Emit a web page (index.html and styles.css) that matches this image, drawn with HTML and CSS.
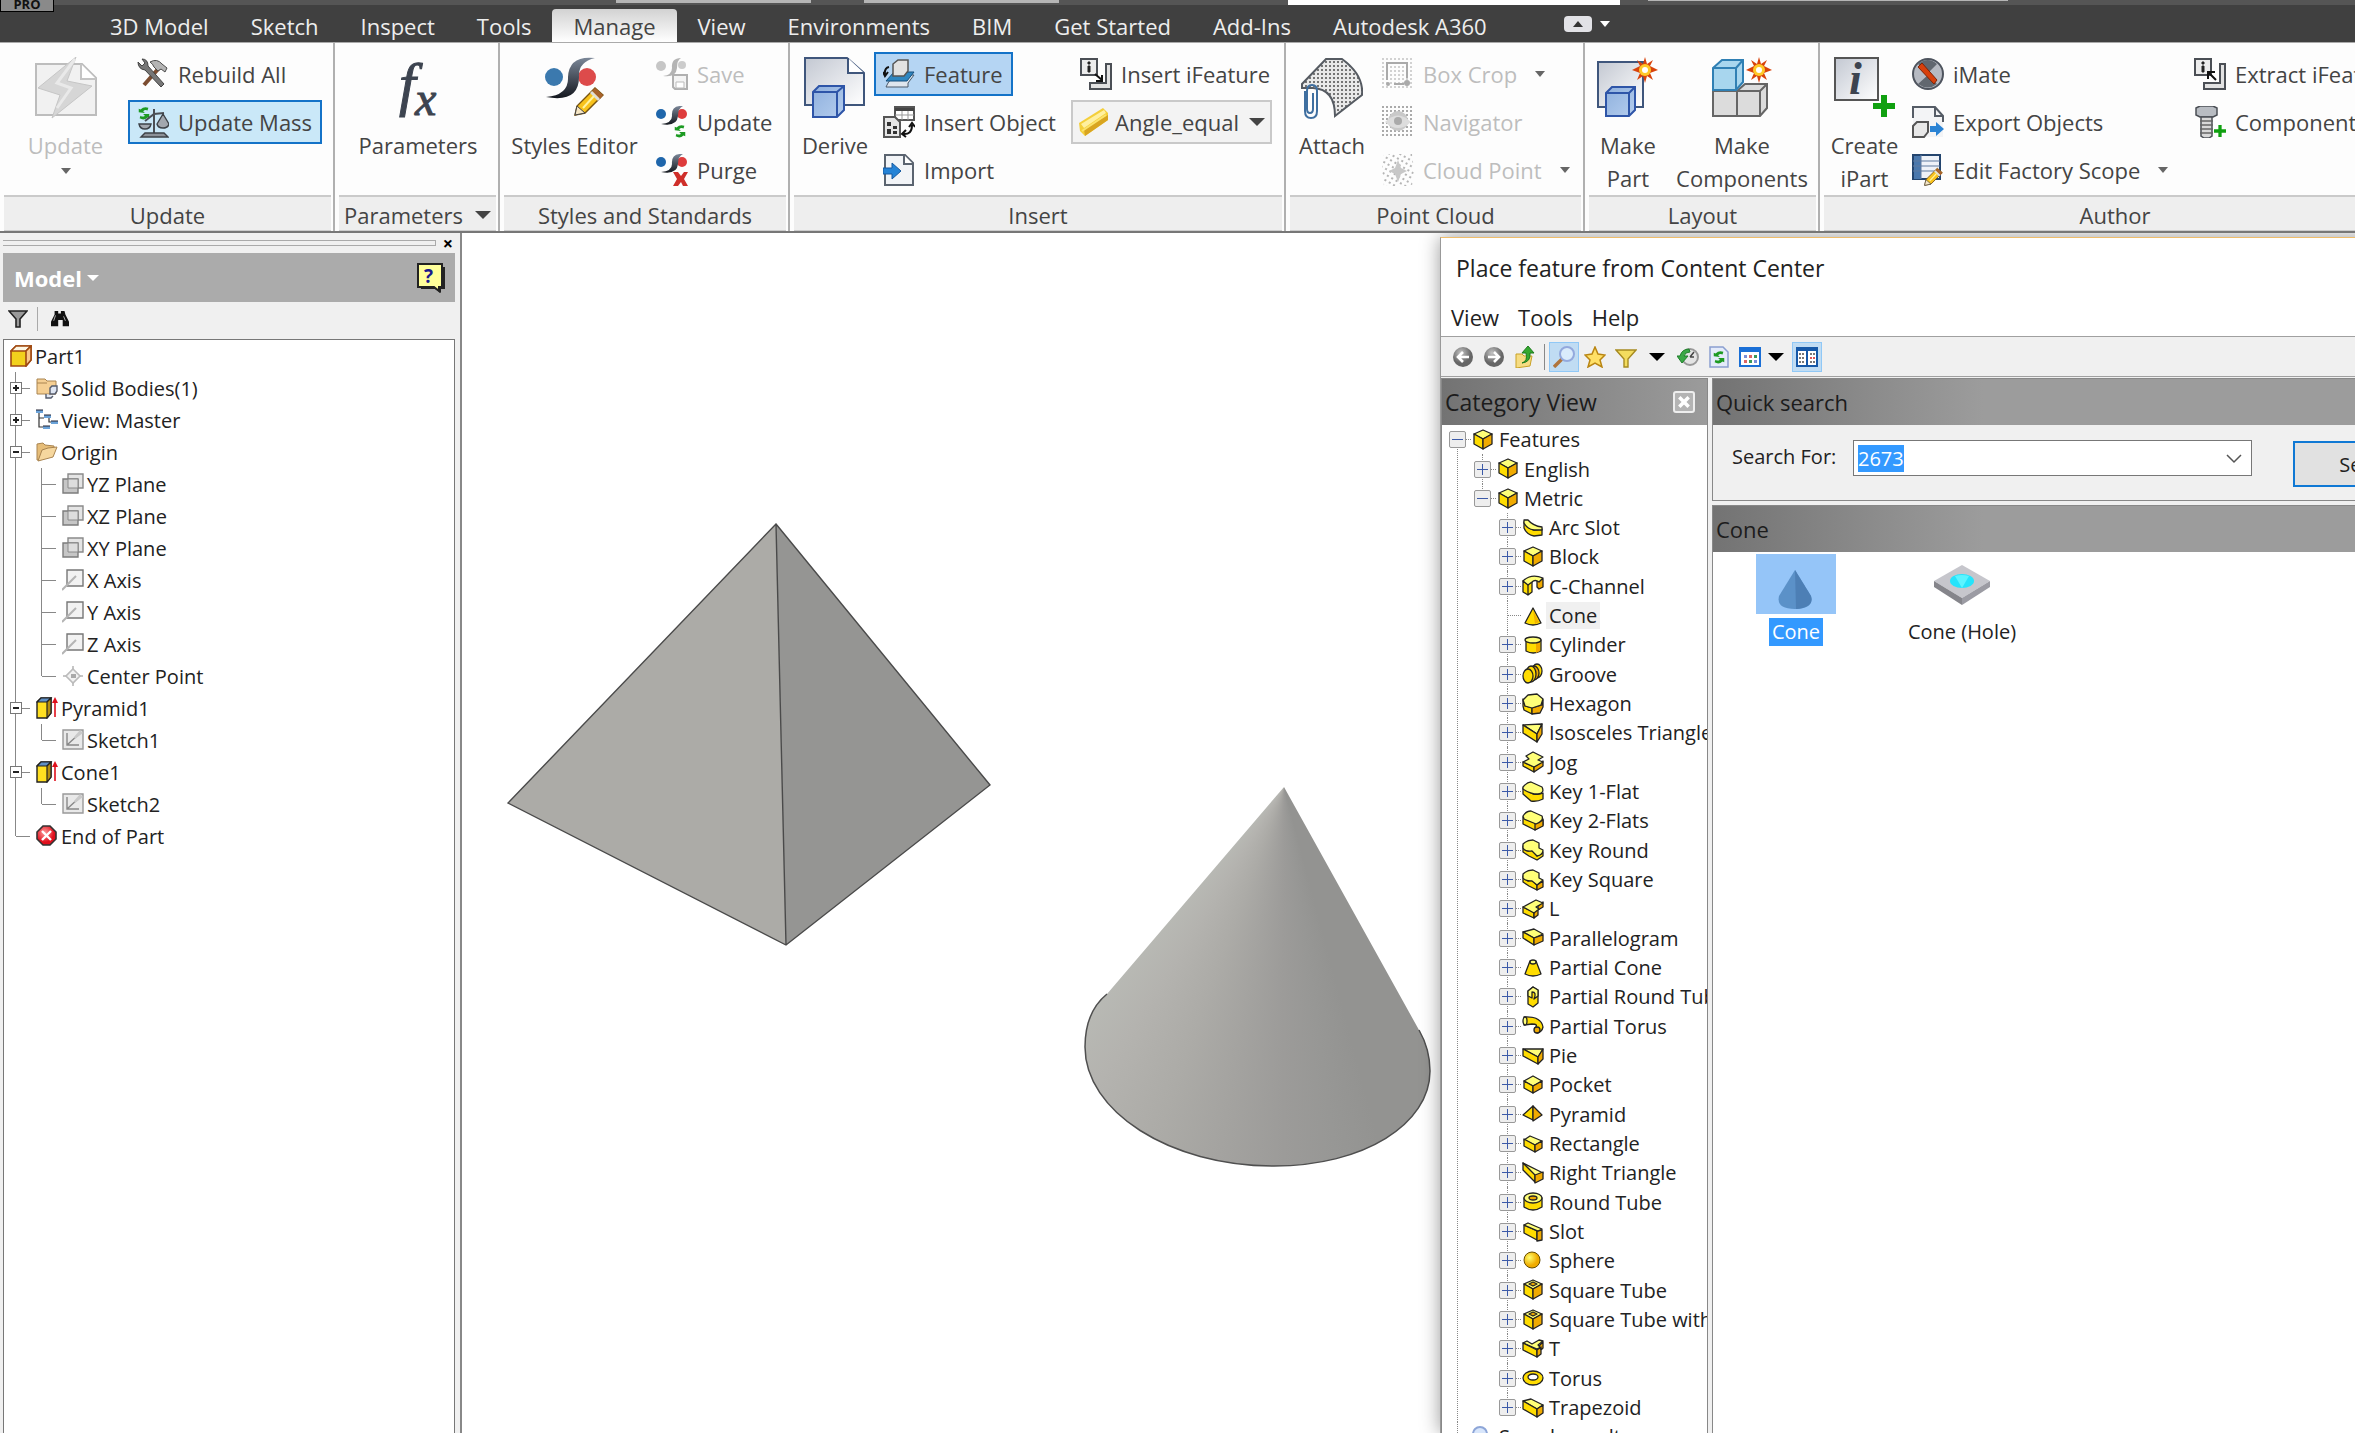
FILE: index.html
```html
<!DOCTYPE html>
<html lang="en">
<head>
  <meta charset="utf-8">
  <meta name="viewport" content="width=device-width, initial-scale=1.0">
  <title>Inventor - Part1</title>
  <link rel="stylesheet" href="styles.css">
</head>
<body>

  <!-- icon set -->
  <svg class="defs" width="0" height="0">
    <defs>
      <linearGradient id="gPage" x1="0" y1="0" x2="1" y2="1"><stop offset="0" stop-color="#c3c8d2"/><stop offset="1" stop-color="#fff"/></linearGradient>
      <linearGradient id="gSwoosh" x1="0" y1="0" x2="0" y2="1"><stop offset="0" stop-color="#7b8798"/><stop offset="1" stop-color="#14181f"/></linearGradient>
      <linearGradient id="gBlue" x1="0" y1="0" x2="1" y2="1"><stop offset="0" stop-color="#8fb0dd"/><stop offset="1" stop-color="#b4cdee"/></linearGradient>
      <radialGradient id="gSphere" cx=".35" cy=".35"><stop offset="0" stop-color="#ffff70"/><stop offset="1" stop-color="#f0ac00"/></radialGradient>
      <radialGradient id="gRed" cx=".4" cy=".35"><stop offset="0" stop-color="#ff9d9d"/><stop offset="1" stop-color="#e00f1c"/></radialGradient>
      <radialGradient id="gRound" cx=".4" cy=".3"><stop offset="0" stop-color="#c4c4c4"/><stop offset="1" stop-color="#666"/></radialGradient>
    </defs>

    <!-- shared bits -->
    <symbol id="sync" viewBox="0 0 16 16"><path d="M2 7V3l2 1q4-4 9-2l-1 3q-3-1-5 1l2 2zM14 9v5l-2-1q-4 4-9 1l1-3q3 2 5 0L7 9z" fill="#1c9a22"/></symbol>
    <symbol id="spark" viewBox="0 0 26 26"><path d="M13 0l2 7 6-4-3 6 8 4-8 3 3 7-6-4-2 7-2-7-6 4 3-7-8-3 8-4-3-6 6 4z" fill="#d8430b"/><circle cx="13" cy="13" r="6" fill="#ffc928"/><circle cx="13" cy="13" r="3" fill="#fff"/></symbol>
    <symbol id="plus" viewBox="0 0 22 22"><path d="M8 0h6v8h8v6h-8v8H8v-8H0V8h8z" fill="#10a010"/></symbol>
    <symbol id="swoosh" viewBox="0 0 32 20"><circle cx="5" cy="8" r="5" fill="#1f66ab"/><circle cx="26" cy="8" r="5" fill="#de3c3c"/><path d="M27 0q-12-1-11 10 0 7-11 8 16 3 17-8 0-8 5-10z" fill="url(#gSwoosh)"/></symbol>
    <symbol id="pencil" viewBox="0 0 30 30"><path d="M1 29l2-9L21 2l8 7-18 18z" fill="#f8c21c" stroke="#7a5510" stroke-width="1.4"/><path d="M21 2l8 7-3 4-8-8z" fill="#a8622c"/><path d="M18 5l8 8-2 2-8-8z" fill="#ddd"/><path d="M1 29l2-9 8 7z" fill="#f6e6c4" stroke="#444"/><path d="M9 22L20 10" stroke="#fff3a0" stroke-width="2"/></symbol>

    <!-- ribbon, large -->
    <symbol id="b-update" viewBox="0 0 62 62"><path d="M1 7h46l14 14v37H1z" fill="#f1f1f1" stroke="#bdbdbd" stroke-width="2"/><path d="M46 7v15h15" fill="#fff" stroke="#c4c4c4" stroke-width="2"/><path d="M41 0L3 31l22 7-8 23 40-32-25-5z" fill="#d6d6d6" stroke="#c6c6c6"/><path d="M40 2L22 26l14 5-14 20" fill="none" stroke="#e9e9e9" stroke-width="3"/></symbol>
    <symbol id="b-styles" viewBox="0 0 62 62"><circle cx="10" cy="20" r="9" fill="#3b79ae"/><circle cx="43" cy="20" r="9" fill="#dd4b4b"/><path d="M51 1Q25-2 24 20q1 18-22 20 33 6 33-20Q34 5 51 1z" fill="url(#gSwoosh)"/><use href="#pencil" x="30" y="29" width="30" height="30"/></symbol>
    <symbol id="b-derive" viewBox="0 0 62 62"><path d="M1 1h42l17 15v32H1z" fill="url(#gPage)" stroke="#3f567c" stroke-width="2"/><path d="M44 1v15h16" fill="#fff" stroke="#3f567c" stroke-width="2"/><path d="M9 35l6-6h25v24l-7 7H9z" fill="url(#gBlue)" stroke="#2e55a8" stroke-width="2"/><path d="M9 35h24v25M33 35l7-6" fill="none" stroke="#2e55a8" stroke-width="2"/></symbol>
    <symbol id="b-attach" viewBox="0 0 62 62"><pattern id="dots" width="4" height="4" patternUnits="userSpaceOnUse"><rect width="4" height="4" fill="#e9e9e9"/><rect width="2" height="2" fill="#757575"/></pattern><path d="M1 27L25 2h16q22 16 20 36L34 59Q34 32 12 31H1z" fill="url(#dots)" stroke="#565b62" stroke-width="2"/><path d="M4 34v20q0 7 6 7t6-7V34q0-6-5-6t-5 6v18q0 4 3 4t3-4V36" fill="none" stroke="#3f6fa0" stroke-width="2"/></symbol>
    <symbol id="b-part" viewBox="0 0 62 62"><path d="M1 5h45v45H1z" fill="url(#gPage)" stroke="#3f567c" stroke-width="2"/><path d="M9 36l6-6h23v23l-6 6H9z" fill="url(#gBlue)" stroke="#2e55a8" stroke-width="2"/><path d="M9 36h23v23M32 36l6-6" fill="none" stroke="#2e55a8" stroke-width="2"/><use href="#spark" x="35" y="0" width="26" height="26"/></symbol>
    <symbol id="b-comps" viewBox="0 0 62 62"><path d="M2 34h24V59H2zM26 34l8-7h22v24l-7 8H26z" fill="#dcdcdc" stroke="#666" stroke-width="2"/><path d="M26 34h23v25M49 34l7-7M26 34v25" fill="none" stroke="#666" stroke-width="2"/><path d="M2 11l9-8h21v22l-7 8H2z" fill="#a8d6ee" stroke="#3080b4" stroke-width="2"/><path d="M2 11h23v22M25 11l7-8" fill="none" stroke="#3080b4" stroke-width="2"/><use href="#spark" x="35" y="0" width="26" height="26"/></symbol>

    <!-- ribbon, small -->
    <symbol id="s-rebuild" viewBox="0 0 32 32"><path d="M7 27L22 10" stroke="#7b4c30" stroke-width="4"/><path d="M13 4q7-4 12 2l5 4-2 4-4-3-3 2-4-4q-1-3-4-5z" fill="#b4b4b4" stroke="#4c4c4c"/><path d="M1 4l4 4 3-3-3-4q6 0 6 7l16 18-3 3L8 12Q1 11 1 4z" fill="#777" stroke="#444"/></symbol>
    <symbol id="s-mass" viewBox="0 0 32 32"><use href="#sync" x="0" y="0" width="14" height="14"/><path d="M17 3v25M8 15l9-7 10-1" stroke="#4b4f55" stroke-width="2" fill="none"/><path d="M2 18h12q-1 5-6 5t-6-5zM20 18l6-10 6 10q-1 4-6 4t-6-4z" fill="#a2a7ae" stroke="#3d4147" stroke-width="1.4"/><path d="M4 31l4-4h19l4 4z" fill="#8c9198" stroke="#3d4147" stroke-width="1.4"/></symbol>
    <symbol id="s-save" viewBox="0 0 32 32"><circle cx="5" cy="8" r="5" fill="#c6c6c6"/><circle cx="26" cy="7" r="4" fill="#ccc"/><path d="M25 0q-10 0-9 10 0 7-9 8 13 2 14-8 0-8 4-10z" fill="#b4b4b4"/><path d="M17 17h14v14H19l-2-2z" fill="#f4f4f4" stroke="#b0b0b0" stroke-width="2"/><path d="M20 24h8v6h-8z" fill="#fff" stroke="#bbb"/></symbol>
    <symbol id="s-sup" viewBox="0 0 32 32"><use href="#swoosh" width="32" height="20"/><use href="#sync" x="17" y="18" width="14" height="14"/></symbol>
    <symbol id="s-purge" viewBox="0 0 32 32"><use href="#swoosh" width="32" height="20"/><path d="M17 18h5l3 4 3-4h4l-4 7 4 7h-5l-2-4-3 4h-5l4-7z" fill="#cf2f2a"/></symbol>
    <symbol id="s-feature" viewBox="0 0 32 32"><path d="M5 25l6-8h20l-6 8v4H3z" fill="#dfe6ee" stroke="#4c5b6a"/><path d="M3 23l8-9h20l-7 9z" fill="#2f86c0" stroke="#174f7c"/><path d="M10 6l5-4h10v11l-4 5H10z" fill="#e2e2e2" stroke="#555" stroke-width="1.5"/><path d="M6 9q-5 1-4 8M0 14l2 4 3-4" fill="none" stroke="#111" stroke-width="2"/></symbol>
    <symbol id="s-object" viewBox="0 0 32 32"><path d="M12 1h19v13H12z" fill="#fff" stroke="#555" stroke-width="2"/><path d="M12 2h19v3H12z" fill="#444"/><path d="M12 9h19M19 5v9M25 5v9" stroke="#999"/><path d="M1 11h11l5 5v15H1z" fill="#e6e6e6" stroke="#555" stroke-width="2"/><path d="M4 16h4v4H4zM4 23h4v5H4zM10 20h4v3h-4zM10 25h4v3h-4z" fill="#333"/><path d="M20 28q9 1 9-9M26 21l3-4 3 4M23 24l-4 4 4 3" fill="none" stroke="#111" stroke-width="2"/></symbol>
    <symbol id="s-import" viewBox="0 0 32 32"><path d="M2 1h20l8 8v22H2z" fill="#f2f4f7" stroke="#5b6470" stroke-width="2"/><path d="M21 1v9h9" fill="#fff" stroke="#5b6470" stroke-width="2"/><path d="M0 14h9v-5l9 8-9 8v-5H0z" fill="#2583d6" stroke="#1559a0"/></symbol>
    <symbol id="s-ifeature" viewBox="0 0 32 32"><path d="M1 1h16v16H1z" fill="#ececec" stroke="#4b4f55" stroke-width="2"/><path d="M8 4h2v2H8zM8 8h2v6H8z" fill="#222" stroke="#222"/><path d="M26 6h5v25H10v-6h16z" fill="#e2e2e2" stroke="#4b4f55" stroke-width="2"/><path d="M15 16l7 6M22 17v6h-6" stroke="#111" stroke-width="2" fill="none"/></symbol>
    <symbol id="s-extract" viewBox="0 0 32 32"><path d="M1 1h16v16H1z" fill="#ececec" stroke="#4b4f55" stroke-width="2"/><path d="M8 4h2v2H8zM8 8h2v6H8z" fill="#222" stroke="#222"/><path d="M26 6h5v25H10v-6h16z" fill="#e2e2e2" stroke="#4b4f55" stroke-width="2"/><path d="M22 22l-7-7M14 21v-7h7" stroke="#111" stroke-width="2" fill="none"/></symbol>
    <symbol id="s-angle" viewBox="0 0 32 32"><path d="M1 17L25 2l5 5v7L7 30l-5-5z" fill="#f4cf3a"/><path d="M3 18L26 4l2 3L6 22z" fill="#fff0a0"/><path d="M6 23L30 9v5L7 30z" fill="#d9a520"/><path d="M4 25L28 9" stroke="#fbe36c" stroke-width="2"/></symbol>
    <symbol id="s-crop" viewBox="0 0 32 32"><pattern id="pdot" width="4" height="4" patternUnits="userSpaceOnUse"><rect width="2" height="2" fill="#d2d2d2"/></pattern><path d="M0 0h32v32H0z" fill="url(#pdot)"/><path d="M5 22V5h20v15M12 26h10" fill="none" stroke="#aaa" stroke-width="2"/><circle cx="6" cy="26" r="2" fill="#aaa"/><circle cx="25" cy="25" r="3" fill="#aaa"/></symbol>
    <symbol id="s-nav" viewBox="0 0 32 32"><pattern id="pdot2" width="4" height="4" patternUnits="userSpaceOnUse"><rect width="2" height="2" fill="#aaa"/></pattern><path d="M0 0h32v32H0z" fill="url(#pdot2)"/><circle cx="16" cy="15" r="10" fill="#c9c9c9"/><path d="M3 16q13-13 26 0-13 12-26 0z" fill="#ddd"/><circle cx="16" cy="15" r="4" fill="#aaa"/></symbol>
    <symbol id="s-cloud" viewBox="0 0 32 32"><pattern id="pdot3" width="5" height="5" patternUnits="userSpaceOnUse" patternTransform="rotate(30)"><rect width="2" height="2" fill="#b5b5b5"/></pattern><path d="M2 0h28l2 16-2 16H2L0 16z" fill="url(#pdot3)"/><path d="M16 6l3 8 6 3-6 3-3 8-3-8-6-3 6-3z" fill="#c8c8c8"/></symbol>
    <symbol id="s-imate" viewBox="0 0 32 32"><circle cx="16" cy="16" r="15" fill="#b6bac2" stroke="#4e545e" stroke-width="2"/><path d="M6 6q10-8 19 0L16 15zM6 26q10 7 19 0l-9-9z" fill="#61676f"/><path d="M6 9l4-4 15 17-3 4z" fill="#d8400c" stroke="#7e2407"/></symbol>
    <symbol id="s-export" viewBox="0 0 32 32"><path d="M1 1h22l8 9v21H1z" fill="#f3f4f6"/><path d="M1 12V1h22l8 9v6M23 1v9h8" fill="none" stroke="#555c66" stroke-width="2"/><path d="M1 20l4-4h11v10l-4 5H1z" fill="#e8e8e8" stroke="#555" stroke-width="2"/><path d="M18 20h6v-4l8 7-8 7v-4h-6z" fill="#2a83d4"/></symbol>
    <symbol id="s-scope" viewBox="0 0 32 32"><path d="M1 1h27v24H1z" fill="#eef2f8" stroke="#24456e" stroke-width="2"/><path d="M2 2h7v23H2z" fill="#4a78ad"/><path d="M1 7h27M1 12h27M1 17h27M9 1v24" stroke="#5e7b9f"/><use href="#pencil" x="12" y="13" width="19" height="19"/></symbol>
    <symbol id="s-bolt" viewBox="0 0 32 32"><path d="M2 2l4-2h13l4 2v7l-4 2H6L2 9z" fill="#b8bcc2" stroke="#4b4f55" stroke-width="1.5"/><path d="M7 11h11v19l-3 2h-5l-3-2z" fill="#d8d8d8" stroke="#4b4f55" stroke-width="1.5"/><path d="M6 15h13M6 19h13M6 23h13M6 27h13" stroke="#666" stroke-width="1.5"/><use href="#plus" x="20" y="19" width="12" height="12"/></symbol>

    <!-- model browser -->
    <symbol id="m-filter" viewBox="0 0 20 18"><path d="M1 1h18l-7 8v8H8V9z" fill="#999" stroke="#222" stroke-width="1.6"/></symbol>
    <symbol id="m-find" viewBox="0 0 22 20"><path d="M5 1h4v3h3V1h4l1 4 4 8v5h-7v-7h-5v7H1v-5l4-8z" fill="#111"/><path d="M4 12l2-6M15 7l2 5" stroke="#bbb"/></symbol>
    <symbol id="m-part" viewBox="0 0 22 22"><path d="M1 6l5-5h15v14l-5 6H1z" fill="#f2d11c" stroke="#a04a12" stroke-width="1.6"/><path d="M1 6l5-5h15l-5 5z" fill="#fdf6e3" stroke="#a04a12" stroke-width="1.6"/><path d="M16 6l5-5v14l-5 6z" fill="#f9c88a" stroke="#a04a12" stroke-width="1.6"/></symbol>
    <symbol id="m-bodies" viewBox="0 0 22 22"><path d="M1 2h8l2 2h9v13H1z" fill="#f5cf93" stroke="#a98450"/><path d="M1 6h10" stroke="#a98450"/><path d="M14 11l2-2h5v5l-2 3h-5zM10 17v4h5l2-2" fill="#dfe6f3" stroke="#555c6c" stroke-width="1.4"/></symbol>
    <symbol id="m-view" viewBox="0 0 22 22"><path d="M3 3v15h5M3 9h5M13 9v4h4" fill="none" stroke="#333" stroke-width="1.2"/><path d="M0 1h7v3H0zM8 6h7v3H8zM15 12h7v3h-7zM7 17h7v3H7z" fill="#6ba3d9"/><path d="M0 1h7M8 6h7M15 12h7M7 17h7" stroke="#223"/></symbol>
    <symbol id="m-folder" viewBox="0 0 22 22"><path d="M1 3l6-1 2 2 9 1v4L3 19H1z" fill="#e6bd78" stroke="#a98450"/><path d="M6 9l6-2 9-1-4 10L2 20z" fill="#f6d79e" stroke="#a98450"/></symbol>
    <symbol id="m-plane" viewBox="0 0 22 22"><path d="M6 1h15v14H6z" fill="#e4e4e4" stroke="#8a8a8a" stroke-width="1.4"/><path d="M1 6h15v14H1z" fill="#c6c6c6" stroke="#7c7c7c" stroke-width="1.4"/><path d="M6 6h10v9H6z" fill="#ddd" stroke="#8a8a8a"/></symbol>
    <symbol id="m-axis" viewBox="0 0 22 22"><path d="M5 1h16v16H5z" fill="#f2f2f2" stroke="#777" stroke-width="1.4"/><path d="M0 21L14 7" stroke="#b4b4b4" stroke-width="2"/></symbol>
    <symbol id="m-point" viewBox="0 0 22 22"><path d="M11 1v20M1 11h20" stroke="#c6c6c6" stroke-width="2"/><path d="M11 4l7 7-7 7-7-7z" fill="#f2f2f2" stroke="#bbb" stroke-width="1.6"/><path d="M9 9h5v4H9z" fill="#aaa"/></symbol>
    <symbol id="m-extrude" viewBox="0 0 22 22"><path d="M1 5l4-4h10v15l-4 5H1z" fill="#ffdf20" stroke="#222" stroke-width="1.4"/><path d="M1 5l4-4h10l-4 4z" fill="#5f8fc4" stroke="#222" stroke-width="1.2"/><path d="M11 5l4-4v15l-4 5z" fill="#b48e10" stroke="#222" stroke-width="1.2"/><path d="M19 20V4" stroke="#e0101c" stroke-width="1.6"/><path d="M16 6l3-6 3 6z" fill="#e0101c"/></symbol>
    <symbol id="m-sketch" viewBox="0 0 22 22"><path d="M1 1h20v19H1z" fill="#e9e9e9" stroke="#999" stroke-width="1.4"/><path d="M5 4v12h12M5 16L17 5" fill="none" stroke="#888" stroke-width="1.4"/><path d="M12 8l6-7 3 3-8 6z" fill="#c9c9c9"/></symbol>
    <symbol id="m-end" viewBox="0 0 22 22"><path d="M7 1h7l6 6v7l-6 6H7l-6-6V7z" fill="url(#gRed)" stroke="#333" stroke-width="1.6"/><path d="M6 6l9 9M15 6l-9 9" stroke="#fff" stroke-width="2.4"/></symbol>

    <!-- content center toolbar -->
    <symbol id="t-back" viewBox="0 0 22 22"><circle cx="11" cy="11" r="10" fill="url(#gRound)"/><path d="M17 11H6M11 6l-5 5 5 5" fill="none" stroke="#fff" stroke-width="2.6"/></symbol>
    <symbol id="t-next" viewBox="0 0 22 22"><circle cx="11" cy="11" r="10" fill="url(#gRound)"/><path d="M5 11h11M11 6l5 5-5 5" fill="none" stroke="#fff" stroke-width="2.6"/></symbol>
    <symbol id="t-up" viewBox="0 0 22 22"><path d="M2 8h6l2 2h8l-2 10-14 2z" fill="#f6dc82" stroke="#c9a227"/><path d="M8 17q6-2 4-10H8l6-7 6 7h-4q1 9-8 10z" fill="#35a82f" stroke="#1c7a1c"/></symbol>
    <symbol id="t-search" viewBox="0 0 22 22"><path d="M1 21l8-8" stroke="#b0743c" stroke-width="3.4"/><circle cx="14" cy="8" r="7" fill="#d9ebfb" stroke="#93a9dd" stroke-width="2"/></symbol>
    <symbol id="t-star" viewBox="0 0 22 22"><path d="M11 1l3 7 7 1-5 5 2 7-7-4-7 4 2-7-5-5 7-1z" fill="#ffe066" stroke="#b98512" stroke-width="1.5"/></symbol>
    <symbol id="t-funnel" viewBox="0 0 22 22"><path d="M1 4h20l-8 9v8H9v-8z" fill="#f3dc5e" stroke="#a68a20" stroke-width="1.4"/></symbol>
    <symbol id="t-history" viewBox="0 0 22 22"><circle cx="13" cy="11" r="8" fill="#e4e4e4" stroke="#999" stroke-width="2"/><path d="M13 11l4-5M13 11h4" stroke="#444" stroke-width="1.5"/><path d="M0 10h3q2-7 9-7l1 3q-5 0-6 4h4l-6 7z" fill="#3aa845" stroke="#1f7f2a"/></symbol>
    <symbol id="t-refresh" viewBox="0 0 22 22"><path d="M2 1h13l5 5v15H2z" fill="#e4ebfa" stroke="#8a9fd0" stroke-width="1.5"/><use href="#sync" x="4" y="4" width="14" height="14"/></symbol>
    <symbol id="t-grid" viewBox="0 0 22 22"><path d="M1 2h20v18H1z" fill="#fff" stroke="#1a6fd6" stroke-width="2"/><path d="M1 2h20v4H1z" fill="#1a6fd6"/><path d="M5 9h3v3H5zM15 14h3v3h-3z" fill="#7b8fd8"/><path d="M10 9h3v3h-3zM5 14h3v3H5z" fill="#d66"/><path d="M15 9h3v3h-3zM10 14h3v3h-3z" fill="#3a9a5a"/></symbol>
    <symbol id="t-layout" viewBox="0 0 22 22"><path d="M1 2h20v18H1z" fill="#fff" stroke="#1558a8" stroke-width="2"/><path d="M1 2h20v3H1zM10 2h2v18h-2z" fill="#1558a8"/><path d="M3 8h5M3 12h5M3 16h5M14 8h5M14 16h5" stroke="#777" stroke-width="2" stroke-dasharray="2 1"/><path d="M14 12h5" stroke="#d55" stroke-width="2" stroke-dasharray="2 1"/></symbol>

    <!-- category shapes -->
    <symbol id="c-block" viewBox="0 0 22 22"><path class="t" d="M11 1l9 4-9 5-9-5z"/><path class="l" d="M2 5l9 5v10l-9-5z"/><path class="r" d="M20 5l-9 5v10l9-5z"/></symbol>
    <symbol id="c-arc" viewBox="0 0 22 22"><path class="l" d="M2 5q4 7 10 8l8-1v6l-8 1Q5 18 2 11z"/><path class="t" d="M2 3l4 0q5 6 14 7v3h-8Q5 12 2 6z"/></symbol>
    <symbol id="c-channel" viewBox="0 0 22 22"><path class="r" d="M15 6l6-2v8l-4 2-2-2z"/><path class="l" d="M1 6l5 3v11l-5-3zM6 9l4-2v10l-4 3z"/><path class="t" d="M1 6Q9-2 21 3l-4 4q-4-3-7 0l-4 3z"/></symbol>
    <symbol id="c-cone" viewBox="0 0 22 22"><path class="l" d="M11 3l8 15q-8 4-16 0z"/><path d="M11 5l2 14 4-2z" fill="#f2b400"/></symbol>
    <symbol id="c-cylinder" viewBox="0 0 22 22"><path class="l" d="M4 6v11q7 4 15 0V6z"/><path d="M14 8v11l4-2V7z" fill="#f2a900"/><ellipse class="t" cx="11" cy="6" rx="8" ry="3"/></symbol>
    <symbol id="c-groove" viewBox="0 0 22 22"><ellipse class="l" cx="15" cy="8" rx="5" ry="7"/><ellipse class="r" cx="12" cy="10" rx="5" ry="7"/><ellipse class="l" cx="9" cy="11" rx="5" ry="8"/><ellipse class="l" cx="6" cy="13" rx="5" ry="7"/></symbol>
    <symbol id="c-hexagon" viewBox="0 0 22 22"><path class="l" d="M1 6l2 7 7 2v6l-8-4-1-4z"/><path class="r" d="M10 15l10-3 1-5v7l-3 6-8 1z"/><path class="t" d="M6 2l9-1 6 5-2 6-9 3-7-2-2-6z"/></symbol>
    <symbol id="c-iso" viewBox="0 0 22 22"><path class="t" d="M1 3l19-1-5 10z"/><path class="l" d="M1 3l14 9v8L1 11z"/><path class="r" d="M20 2l-5 10v8l5-8z"/></symbol>
    <symbol id="c-jog" viewBox="0 0 22 22"><path class="l" d="M1 11l11 5v5L1 15z"/><path class="r" d="M12 16l9-6v5l-9 6z"/><path class="t" d="M4 5l7-4 10 5-5 3 5 2-9 5-11-5 6-3z"/></symbol>
    <symbol id="c-key1" viewBox="0 0 22 22"><path class="l" d="M1 7l10 6q7 1 10-1v6q-6 3-12 2L1 13z"/><path class="t" d="M1 6q4-5 8-5l11 5q3 6-4 7-8 0-15-5z"/></symbol>
    <symbol id="c-key2" viewBox="0 0 22 22"><path class="l" d="M1 7l12 6 8-4v6l-8 5-12-6z"/><path class="r" d="M13 14l8-4v6l-8 4z"/><path class="t" d="M1 6q3-5 8-5l11 5q2 5-6 8L2 9z"/></symbol>
    <symbol id="c-keyr" viewBox="0 0 22 22"><path class="l" d="M1 7l5 5 5-1 4 6 6-4v4l-6 4-8-4-6-4z"/><path class="t" d="M1 5q4-4 10-4l6 3v5l4 2q0 5-6 6l-5-5q-7 1-9-3z"/></symbol>
    <symbol id="c-keys" viewBox="0 0 22 22"><path class="l" d="M1 7l5 5 4-1 5 5v5l-8-4-6-4z"/><path class="r" d="M15 16l6-4v6l-6 3z"/><path class="t" d="M1 5q4-4 10-4l6 3v5l4 2-6 5-5-4q-7 0-9-3z"/></symbol>
    <symbol id="c-l" viewBox="0 0 22 22"><path class="l" d="M1 9l11 5v6L1 15z"/><path class="r" d="M12 14l4-3v6l-4 3zM16 8l5-4v5l-5 3z"/><path class="t" d="M1 9L14 2l7 3-7 4 3 2-5 4z"/></symbol>
    <symbol id="c-para" viewBox="0 0 22 22"><path class="t" d="M1 5l11-3 9 5-9 4z"/><path class="l" d="M1 5l11 6v7L1 11z"/><path class="r" d="M12 11l9-3v6l-9 4z"/></symbol>
    <symbol id="c-pcone" viewBox="0 0 22 22"><path class="l" d="M8 4h6l5 13q-8 4-16 0z"/><ellipse class="t" cx="11" cy="5" rx="3" ry="2"/></symbol>
    <symbol id="c-ptube" viewBox="0 0 22 22"><path class="l" d="M6 5l5-4 5 3v13l-5 4-5-3z"/><path class="t" d="M6 5l5-4 5 3v6l-4 3q3-7-2-7v6l-4-2z"/></symbol>
    <symbol id="c-ptorus" viewBox="0 0 22 22"><path class="l" d="M2 2q17-1 19 10-1 5-6 6l-2-5q4-4-3-4l-8 1z"/><ellipse class="t" cx="3" cy="6" rx="2" ry="4"/><ellipse class="r" cx="15" cy="15" rx="3" ry="3"/></symbol>
    <symbol id="c-pie" viewBox="0 0 22 22"><path class="t" d="M1 4h20l-5 8z"/><path class="l" d="M1 4l15 8v7L1 11z"/><path class="r" d="M21 4l-5 8v7l5-5z"/></symbol>
    <symbol id="c-pocket" viewBox="0 0 22 22"><path class="t" d="M11 2l9 5-9 5-9-5z"/><path class="l" d="M2 7l9 5v7l-9-5z"/><path class="r" d="M20 7l-9 5v7l9-5z"/></symbol>
    <symbol id="c-pyramid" viewBox="0 0 22 22"><path class="l" d="M11 3v14L1 12z"/><path class="r" d="M11 3l9 9-9 6z"/></symbol>
    <symbol id="c-rect" viewBox="0 0 22 22"><path class="t" d="M8 3l12 5-7 4L2 7z"/><path class="l" d="M2 6l11 6v7L2 13z"/><path class="r" d="M13 12l7-4v7l-7 4z"/></symbol>
    <symbol id="c-right" viewBox="0 0 22 22"><path class="t" d="M1 1l20 10-8 3z"/><path class="l" d="M1 1l12 12v7L1 8z"/><path class="r" d="M13 13l8-3v7l-8 4z"/></symbol>
    <symbol id="c-tube" viewBox="0 0 22 22"><path class="l" d="M2 7v9q9 6 18 0V7z"/><ellipse class="t" cx="11" cy="7" rx="9" ry="5"/><ellipse class="r" cx="11" cy="7" rx="4" ry="2"/></symbol>
    <symbol id="c-slot" viewBox="0 0 22 22"><path class="l" d="M2 4l13 6v9L2 12z"/><path class="r" d="M15 10l5-1v10l-5 1z"/><path class="t" d="M2 4l4-2 14 6-4 2z"/></symbol>
    <symbol id="c-sphere" viewBox="0 0 22 22"><circle cx="10" cy="10" r="8" fill="url(#gSphere)" stroke="#664d00"/></symbol>
    <symbol id="c-sqtube" viewBox="0 0 22 22"><path class="t" d="M11 1l9 4-9 5-9-5z"/><path class="r" d="M11 3l4 2-4 2-4-2z"/><path class="l" d="M2 5l9 5v10l-9-5z"/><path class="r" d="M20 5l-9 5v10l9-5z"/></symbol>
    <symbol id="c-t" viewBox="0 0 22 22"><path class="t" d="M1 5l4-2 5 3 7-4 4 1-5 4 3 2-4 2z"/><path class="l" d="M1 5l14 7v7L1 12z"/><path class="r" d="M15 12l4-3v7l-4 3zM17 8l4-4v6l-2 2z"/></symbol>
    <symbol id="c-torus" viewBox="0 0 22 22"><ellipse class="l" cx="11" cy="11" rx="10" ry="7"/><ellipse cx="11" cy="10" rx="5" ry="3" fill="#fff" stroke="#222" stroke-width="1.3"/></symbol>
    <symbol id="c-trap" viewBox="0 0 22 22"><path class="t" d="M1 4l8-2 12 6-6 4z"/><path class="l" d="M1 4l14 8v8L1 12z"/><path class="r" d="M15 12l6-4v8l-6 4z"/></symbol>
    <symbol id="c-globe" viewBox="0 0 22 22"><circle cx="8" cy="8" r="7" fill="#d8e6fb" stroke="#8ea6d8" stroke-width="2"/></symbol>

    <!-- result thumbnails -->
    <symbol id="r-cone" viewBox="0 0 80 60"><path d="M39 16l16 26q3 13-16 13T23 42z" fill="#5b91c8"/><path d="M39 16l16 26q2 6-2 9-6 4-13 4z" fill="#4d7fb5"/></symbol>
    <symbol id="r-hole" viewBox="0 0 80 60"><path d="M40 11l28 16-28 17-28-17z" fill="#c6c6cc"/><path d="M12 27l28 17v7L12 33z" fill="#85858b"/><path d="M68 27L40 44v7l28-18z" fill="#9b9ba3"/><ellipse cx="40" cy="27" rx="12" ry="7" fill="#25e4fb"/><path d="M40 34l-7-12q7-2 14 0z" fill="#5cf4ff"/></symbol>
  </svg>

  <div class="app">

    <div class="top-strip">
      <span class="badge">PRO</span>
      <i class="seg seg-a"></i><i class="seg seg-b"></i><i class="seg seg-c"></i><i class="seg seg-d"></i>
    </div>

    <nav class="tabs">
      <a href="#">3D Model</a>
      <a href="#">Sketch</a>
      <a href="#">Inspect</a>
      <a href="#">Tools</a>
      <a href="#" class="active">Manage</a>
      <a href="#">View</a>
      <a href="#">Environments</a>
      <a href="#">BIM</a>
      <a href="#">Get Started</a>
      <a href="#">Add-Ins</a>
      <a href="#">Autodesk A360</a>
      <button class="collapse" aria-label="Minimize ribbon"><i class="up"></i></button>
      <i class="caret caret-light"></i>
    </nav>

    <div class="ribbon">
      <section class="panel p-update">
        <div class="panel-body">
          <button class="big" disabled><svg><use href="#b-update"/></svg><span>Update</span><i class="caret"></i></button>
          <div class="col">
            <button class="small"><svg><use href="#s-rebuild"/></svg>Rebuild All</button>
            <button class="small on-light"><svg><use href="#s-mass"/></svg>Update Mass</button>
          </div>
        </div>
        <div class="panel-title">Update</div>
      </section>

      <section class="panel p-params">
        <div class="panel-body">
          <button class="big"><svg viewBox="0 0 62 62"><text x="12" y="47" class="fx-f">f</text><text x="28" y="58" class="fx-x">x</text></svg><span>Parameters</span></button>
        </div>
        <div class="panel-title">Parameters <i class="caret caret-big"></i></div>
      </section>

      <section class="panel p-styles">
        <div class="panel-body">
          <button class="big"><svg><use href="#b-styles"/></svg><span>Styles Editor</span></button>
          <div class="col">
            <button class="small" disabled><svg><use href="#s-save"/></svg>Save</button>
            <button class="small"><svg><use href="#s-sup"/></svg>Update</button>
            <button class="small"><svg><use href="#s-purge"/></svg>Purge</button>
          </div>
        </div>
        <div class="panel-title">Styles and Standards</div>
      </section>

      <section class="panel p-insert">
        <div class="panel-body">
          <button class="big"><svg><use href="#b-derive"/></svg><span>Derive</span></button>
          <div class="col col-wide">
            <button class="small on-blue"><svg><use href="#s-feature"/></svg>Feature</button>
            <button class="small"><svg><use href="#s-object"/></svg>Insert Object</button>
            <button class="small"><svg><use href="#s-import"/></svg>Import</button>
          </div>
          <div class="col">
            <button class="small"><svg><use href="#s-ifeature"/></svg>Insert iFeature</button>
            <div class="combo">
              <svg><use href="#s-angle"/></svg>
              <select aria-label="iFeature"><option>Angle_equal</option></select>
              <i class="caret caret-big"></i>
            </div>
          </div>
        </div>
        <div class="panel-title">Insert</div>
      </section>

      <section class="panel p-cloud">
        <div class="panel-body">
          <button class="big"><svg><use href="#b-attach"/></svg><span>Attach</span></button>
          <div class="col">
            <button class="small" disabled><svg><use href="#s-crop"/></svg>Box Crop<i class="caret"></i></button>
            <button class="small" disabled><svg><use href="#s-nav"/></svg>Navigator</button>
            <button class="small" disabled><svg><use href="#s-cloud"/></svg>Cloud Point<i class="caret"></i></button>
          </div>
        </div>
        <div class="panel-title">Point Cloud</div>
      </section>

      <section class="panel p-layout">
        <div class="panel-body">
          <button class="big"><svg><use href="#b-part"/></svg><span>Make<br>Part</span></button>
          <button class="big"><svg><use href="#b-comps"/></svg><span>Make<br>Components</span></button>
        </div>
        <div class="panel-title">Layout</div>
      </section>

      <section class="panel p-author">
        <div class="panel-body">
          <button class="big"><svg viewBox="0 0 62 62"><path d="M1 1h43v42H1z" fill="url(#gPage)" stroke="#555" stroke-width="2"/><text x="15" y="37" class="ipart-i">i</text><use href="#plus" x="39" y="38" width="22" height="22"/></svg><span>Create<br>iPart</span></button>
          <div class="col col-author">
            <button class="small"><svg><use href="#s-imate"/></svg>iMate</button>
            <button class="small"><svg><use href="#s-export"/></svg>Export Objects</button>
            <button class="small"><svg><use href="#s-scope"/></svg>Edit Factory Scope<i class="caret"></i></button>
          </div>
          <div class="col">
            <button class="small"><svg><use href="#s-extract"/></svg>Extract iFeature</button>
            <button class="small"><svg><use href="#s-bolt"/></svg>Component</button>
          </div>
        </div>
        <div class="panel-title">Author</div>
      </section>
    </div>

    <div class="workspace">
      <aside class="model">
        <div class="grip"><i></i><button aria-label="Close">×</button></div>
        <div class="model-head">
          <button class="model-name">Model<i class="caret caret-white"></i></button>
          <button class="help" aria-label="Help"><svg viewBox="0 0 28 30"><path d="M4 4h24v22h-4v4l-6-4H4z" fill="#222"/><path d="M1 1h24v23h-3v4l-5-4H1z" fill="#ffff9a" stroke="#222" stroke-width="2"/><text x="7" y="20" class="help-q">?</text></svg></button>
        </div>
        <div class="model-tools">
          <button aria-label="Filter"><svg><use href="#m-filter"/></svg></button>
          <button aria-label="Find"><svg><use href="#m-find"/></svg></button>
        </div>
        <div class="model-tree">
          <div class="row"><svg><use href="#m-part"/></svg><span>Part1</span></div>
          <ul>
            <li><div class="row"><button class="exp plus" aria-label="Expand"></button><svg><use href="#m-bodies"/></svg><span>Solid Bodies(1)</span></div></li>
            <li><div class="row"><button class="exp plus" aria-label="Expand"></button><svg><use href="#m-view"/></svg><span>View: Master</span></div></li>
            <li><div class="row"><button class="exp" aria-label="Collapse"></button><svg><use href="#m-folder"/></svg><span>Origin</span></div>
              <ul>
                <li><div class="row leaf"><svg><use href="#m-plane"/></svg><span>YZ Plane</span></div></li>
                <li><div class="row leaf"><svg><use href="#m-plane"/></svg><span>XZ Plane</span></div></li>
                <li><div class="row leaf"><svg><use href="#m-plane"/></svg><span>XY Plane</span></div></li>
                <li><div class="row leaf"><svg><use href="#m-axis"/></svg><span>X Axis</span></div></li>
                <li><div class="row leaf"><svg><use href="#m-axis"/></svg><span>Y Axis</span></div></li>
                <li><div class="row leaf"><svg><use href="#m-axis"/></svg><span>Z Axis</span></div></li>
                <li><div class="row leaf"><svg><use href="#m-point"/></svg><span>Center Point</span></div></li>
              </ul>
            </li>
            <li><div class="row"><button class="exp" aria-label="Collapse"></button><svg><use href="#m-extrude"/></svg><span>Pyramid1</span></div>
              <ul>
                <li><div class="row leaf"><svg><use href="#m-sketch"/></svg><span>Sketch1</span></div></li>
              </ul>
            </li>
            <li><div class="row"><button class="exp" aria-label="Collapse"></button><svg><use href="#m-extrude"/></svg><span>Cone1</span></div>
              <ul>
                <li><div class="row leaf"><svg><use href="#m-sketch"/></svg><span>Sketch2</span></div></li>
              </ul>
            </li>
            <li><div class="row leaf"><svg><use href="#m-end"/></svg><span>End of Part</span></div></li>
          </ul>
        </div>
      </aside>

      <main class="view">
        <svg class="pyramid" viewBox="0 0 484 424">
          <path d="M269 1L279 422 1 280z" fill="#acaba7"/>
          <path d="M269 1L483 262 279 422z" fill="#959593"/>
          <path d="M269 1L483 262 279 422 1 280zL279 422" fill="none" stroke="#4a4a4a" stroke-width="1.4"/>
        </svg>

        <div class="cone">
          <div class="cone-face"></div>
          <svg viewBox="0 0 348 382"><path d="M23 207C7 220 1 240 1 260 1 324 85 379 190 379 280 379 346 337 346 284 346 269 343 257 335 243" fill="none" stroke="#4f4f4f" stroke-width="1.5"/></svg>
        </div>

        <div class="dialog">
          <h1>Place feature from Content Center</h1>
          <div class="menu"><a href="#">View</a><a href="#">Tools</a><a href="#">Help</a></div>
          <div class="toolbar">
            <button aria-label="Back"><svg><use href="#t-back"/></svg></button>
            <button aria-label="Forward"><svg><use href="#t-next"/></svg></button>
            <button aria-label="Up"><svg><use href="#t-up"/></svg></button>
            <i class="sep"></i>
            <button class="on" aria-label="Search"><svg><use href="#t-search"/></svg></button>
            <button aria-label="Favorites"><svg><use href="#t-star"/></svg></button>
            <button aria-label="Filter"><svg><use href="#t-funnel"/></svg></button>
            <button aria-label="Filter list"><i class="caret caret-black"></i></button>
            <button aria-label="History"><svg><use href="#t-history"/></svg></button>
            <button aria-label="Refresh"><svg><use href="#t-refresh"/></svg></button>
            <button aria-label="Views"><svg><use href="#t-grid"/></svg></button>
            <button class="narrow" aria-label="View list"><i class="caret caret-black"></i></button>
            <button class="on" aria-label="Tree view"><svg><use href="#t-layout"/></svg></button>
          </div>

          <div class="panes">
            <div class="pane category">
              <div class="pane-head">Category View<button aria-label="Close"><svg viewBox="0 0 12 12"><path d="M2 2l8 8M10 2l-8 8" stroke="#fff" stroke-width="3"/></svg></button></div>
              <ul class="cat-tree">
                <li><div class="row"><button class="box" aria-label="Collapse"></button><svg><use href="#c-block"/></svg><span>Features</span></div>
                  <ul>
                    <li><div class="row"><button class="box plus" aria-label="Expand"></button><svg><use href="#c-block"/></svg><span>English</span></div></li>
                    <li><div class="row"><button class="box" aria-label="Collapse"></button><svg><use href="#c-block"/></svg><span>Metric</span></div>
                      <ul class="shapes">
                        <li><div class="row"><button class="box plus" aria-label="Expand"></button><svg><use href="#c-arc"/></svg><span>Arc Slot</span></div></li>
                        <li><div class="row"><button class="box plus" aria-label="Expand"></button><svg><use href="#c-block"/></svg><span>Block</span></div></li>
                        <li><div class="row"><button class="box plus" aria-label="Expand"></button><svg><use href="#c-channel"/></svg><span>C-Channel</span></div></li>
                        <li><div class="row leaf"><svg><use href="#c-cone"/></svg><span class="current">Cone</span></div></li>
                        <li><div class="row"><button class="box plus" aria-label="Expand"></button><svg><use href="#c-cylinder"/></svg><span>Cylinder</span></div></li>
                        <li><div class="row"><button class="box plus" aria-label="Expand"></button><svg><use href="#c-groove"/></svg><span>Groove</span></div></li>
                        <li><div class="row"><button class="box plus" aria-label="Expand"></button><svg><use href="#c-hexagon"/></svg><span>Hexagon</span></div></li>
                        <li><div class="row"><button class="box plus" aria-label="Expand"></button><svg><use href="#c-iso"/></svg><span>Isosceles Triangle</span></div></li>
                        <li><div class="row"><button class="box plus" aria-label="Expand"></button><svg><use href="#c-jog"/></svg><span>Jog</span></div></li>
                        <li><div class="row"><button class="box plus" aria-label="Expand"></button><svg><use href="#c-key1"/></svg><span>Key 1-Flat</span></div></li>
                        <li><div class="row"><button class="box plus" aria-label="Expand"></button><svg><use href="#c-key2"/></svg><span>Key 2-Flats</span></div></li>
                        <li><div class="row"><button class="box plus" aria-label="Expand"></button><svg><use href="#c-keyr"/></svg><span>Key Round</span></div></li>
                        <li><div class="row"><button class="box plus" aria-label="Expand"></button><svg><use href="#c-keys"/></svg><span>Key Square</span></div></li>
                        <li><div class="row"><button class="box plus" aria-label="Expand"></button><svg><use href="#c-l"/></svg><span>L</span></div></li>
                        <li><div class="row"><button class="box plus" aria-label="Expand"></button><svg><use href="#c-para"/></svg><span>Parallelogram</span></div></li>
                        <li><div class="row"><button class="box plus" aria-label="Expand"></button><svg><use href="#c-pcone"/></svg><span>Partial Cone</span></div></li>
                        <li><div class="row"><button class="box plus" aria-label="Expand"></button><svg><use href="#c-ptube"/></svg><span>Partial Round Tube</span></div></li>
                        <li><div class="row"><button class="box plus" aria-label="Expand"></button><svg><use href="#c-ptorus"/></svg><span>Partial Torus</span></div></li>
                        <li><div class="row"><button class="box plus" aria-label="Expand"></button><svg><use href="#c-pie"/></svg><span>Pie</span></div></li>
                        <li><div class="row"><button class="box plus" aria-label="Expand"></button><svg><use href="#c-pocket"/></svg><span>Pocket</span></div></li>
                        <li><div class="row"><button class="box plus" aria-label="Expand"></button><svg><use href="#c-pyramid"/></svg><span>Pyramid</span></div></li>
                        <li><div class="row"><button class="box plus" aria-label="Expand"></button><svg><use href="#c-rect"/></svg><span>Rectangle</span></div></li>
                        <li><div class="row"><button class="box plus" aria-label="Expand"></button><svg><use href="#c-right"/></svg><span>Right Triangle</span></div></li>
                        <li><div class="row"><button class="box plus" aria-label="Expand"></button><svg><use href="#c-tube"/></svg><span>Round Tube</span></div></li>
                        <li><div class="row"><button class="box plus" aria-label="Expand"></button><svg><use href="#c-slot"/></svg><span>Slot</span></div></li>
                        <li><div class="row"><button class="box plus" aria-label="Expand"></button><svg><use href="#c-sphere"/></svg><span>Sphere</span></div></li>
                        <li><div class="row"><button class="box plus" aria-label="Expand"></button><svg><use href="#c-sqtube"/></svg><span>Square Tube</span></div></li>
                        <li><div class="row"><button class="box plus" aria-label="Expand"></button><svg><use href="#c-sqtube"/></svg><span>Square Tube with</span></div></li>
                        <li><div class="row"><button class="box plus" aria-label="Expand"></button><svg><use href="#c-t"/></svg><span>T</span></div></li>
                        <li><div class="row"><button class="box plus" aria-label="Expand"></button><svg><use href="#c-torus"/></svg><span>Torus</span></div></li>
                        <li><div class="row"><button class="box plus" aria-label="Expand"></button><svg><use href="#c-trap"/></svg><span>Trapezoid</span></div></li>
                      </ul>
                    </li>
                  </ul>
                </li>
                <li><div class="row leaf"><svg><use href="#c-globe"/></svg><span>Search results</span></div></li>
              </ul>
            </div>

            <div class="right">
              <div class="pane">
                <div class="pane-head">Quick search</div>
                <form class="search">
                  <label for="searchFor">Search For:</label>
                  <div class="search-box">
                    <input type="text" id="searchFor" value="2673" autofocus>
                    <svg viewBox="0 0 16 10"><path d="M1 1l7 7 7-7" fill="none" stroke="#555" stroke-width="1.5"/></svg>
                  </div>
                  <button type="button">Search</button>
                </form>
              </div>
              <div class="pane results">
                <div class="pane-head">Cone</div>
                <div class="items">
                  <a href="#" class="item selected"><svg><use href="#r-cone"/></svg><span>Cone</span></a>
                  <a href="#" class="item"><svg><use href="#r-hole"/></svg><span>Cone (Hole)</span></a>
                </div>
              </div>
            </div>
          </div>
        </div>
      </main>
    </div>
  </div>

  <script>
    const searchFor = document.getElementById('searchFor');
    searchFor.focus({ preventScroll: true });
    searchFor.select();
  </script>
</body>
</html>
```
FILE: styles.css
```css
* {
  box-sizing: border-box;
}

body {
  margin: 0;
  font-family: "Open Sans", "Noto Sans", sans-serif;
  font-size: 22px;
  color: #444;
  background-color: #f0f0f0;
  overflow: hidden;
}

button {
  font: inherit;
  color: inherit;
  background: none;
  border: 0;
  padding: 0;
}

a {
  color: inherit;
  text-decoration: none;
}

ul {
  list-style: none;
  margin: 0;
  padding: 0;
}

svg {
  display: block;
  flex: none;
}

.defs {
  position: absolute;
}

.app {
  display: flex;
  flex-direction: column;
  height: 100vh;
}

/* carets */
.caret {
  flex: none;
  border: 5px solid transparent;
  border-top: 6px solid #666;
  border-bottom: 0;
}

.caret-big {
  border-width: 8px 8px 0;
  border-top-color: #444;
}

.caret-light,
.caret-white {
  border-top-color: #fff;
}

.caret-white {
  border-width: 6px 6px 0;
}

.caret-black {
  border-width: 8px 8px 0;
  border-top-color: #000;
}

/* top of the window */
.top-strip {
  display: flex;
  align-items: flex-start;
  height: 5px;
  background-color: #555;
  position: relative;
}

.badge {
  position: absolute;
  left: 0;
  top: 0;
  width: 54px;
  height: 12px;
  border: 1px solid #000;
  border-top: 0;
  background-color: #8a8a8a;
  color: #111;
  font-size: 13px;
  font-weight: 700;
  line-height: 9px;
  text-align: center;
}

.seg {
  height: 3px;
  background-color: #b5b5b5;
}

.seg-a {
  width: 195px;
  margin-left: 616px;
}

.seg-b {
  width: 195px;
  margin-left: 53px;
}

.seg-c {
  width: 332px;
  height: 5px;
  margin-left: 229px;
  background-color: #fff;
}

.seg-d {
  width: 360px;
  height: 1px;
  margin-left: 28px;
}

.tabs {
  display: flex;
  align-items: flex-end;
  height: 38px;
  padding-left: 89px;
  background-color: #404040;
  border-bottom: 1px solid #aaa;
}

.tabs a {
  height: 33px;
  padding: 0 21px;
  line-height: 34px;
  color: #eee;
}

.tabs .active {
  background: linear-gradient(#d2d2d2, #fff);
  border-radius: 4px 4px 0 0;
  color: #444;
}

.collapse {
  align-self: center;
  width: 28px;
  height: 16px;
  margin: 0 8px 0 56px;
  border-radius: 4px;
  background-color: #e2e2e6;
  display: flex;
  justify-content: center;
  align-items: center;
}

.collapse .up {
  border: 5px solid transparent;
  border-top: 0;
  border-bottom: 6px solid #333;
}

.tabs .caret {
  align-self: center;
}

/* ribbon */
.ribbon {
  display: flex;
  flex: none;
  height: 190px;
  background-color: #fdfdfd;
  border-bottom: 2px solid #777;
  overflow: hidden;
}

.panel {
  flex: none;
  display: flex;
  flex-direction: column;
  border-right: 2px solid #b0b0b0;
}

.panel-body {
  flex: 1;
  display: flex;
  padding-top: 8px;
}

.panel-title {
  display: flex;
  justify-content: center;
  align-items: center;
  gap: 12px;
  height: 36px;
  margin: 0 2px 0 4px;
  padding-top: 2px;
  background-color: #eee;
  border-top: 2px solid #cacaca;
  border-bottom: 1px solid #ccc;
}

.p-update {
  width: 335px;
}

.p-params {
  width: 165px;
}

.p-styles {
  width: 290px;
}

.p-insert {
  width: 496px;
}

.p-cloud {
  width: 299px;
}

.p-layout {
  width: 235px;
}

.p-author {
  width: 590px;
}

.big {
  display: flex;
  flex-direction: column;
  align-items: center;
  padding-top: 6px;
  white-space: nowrap;
  line-height: 33px;
}

.big svg {
  width: 62px;
  height: 62px;
  margin-bottom: 10px;
}

.big .caret {
  margin-top: 6px;
}

.p-update .big {
  width: 128px;
  padding-left: 3px;
}

.p-params .big {
  width: 165px;
  padding-left: 3px;
}

.p-styles .big {
  width: 147px;
  padding-left: 2px;
}

.p-insert .big {
  width: 84px;
  padding-left: 6px;
}

.p-cloud .big {
  width: 87px;
  padding-left: 5px;
}

.p-layout .big {
  width: 86px;
}

.p-layout .big + .big {
  width: 142px;
}

.p-author .big {
  width: 83px;
  padding-left: 6px;
}

.col {
  display: flex;
  flex-direction: column;
  align-items: flex-start;
  gap: 4px;
  padding-top: 1px;
}

.col-wide {
  width: 197px;
}

.col-author {
  width: 282px;
}

.small {
  display: flex;
  align-items: center;
  height: 44px;
  padding: 0 8px 0 7px;
  border: 2px solid transparent;
  white-space: nowrap;
}

.small svg {
  width: 32px;
  height: 32px;
  margin-right: 9px;
}

.small .caret {
  margin-left: 18px;
}

.on-light {
  background-color: #cae8f8;
  border-color: #1473c8;
}

.on-blue {
  background-color: #b5d5f3;
  border-color: #1473c8;
}

button:disabled {
  color: #bdbdbd;
}

.combo {
  position: relative;
  display: flex;
  align-items: center;
  width: 201px;
  height: 44px;
  border: 2px solid #c9c9c9;
  background-color: #f3f3f3;
}

.combo svg {
  position: absolute;
  left: 5px;
  width: 32px;
  height: 32px;
}

.combo select {
  appearance: none;
  width: 100%;
  height: 100%;
  padding: 0 0 0 42px;
  border: 0;
  background: none;
  font: inherit;
  color: inherit;
}

.combo .caret {
  position: absolute;
  right: 5px;
}

.fx-f,
.fx-x,
.ipart-i {
  font-family: "Liberation Serif", serif;
  font-style: italic;
  fill: #3d4450;
}

.fx-f,
.fx-x {
  stroke: #3d4450;
  stroke-width: 1px;
}

.fx-f {
  font-size: 60px;
}

.fx-x {
  font-size: 48px;
}

.ipart-i {
  font-size: 46px;
  font-weight: 700;
}

/* workspace */
.workspace {
  flex: 1;
  display: flex;
  min-height: 0;
}

.model {
  flex: none;
  width: 462px;
  display: flex;
  flex-direction: column;
  padding: 0 5px 0 3px;
  border-right: 2px solid #888;
  background-color: #f0f0f0;
}

.grip {
  display: flex;
  align-items: center;
  gap: 5px;
  height: 20px;
}

.grip i {
  flex: 1;
  height: 6px;
  border: 1px solid #aaa;
  border-left: 0;
}

.grip button {
  width: 14px;
  font-size: 18px;
  font-weight: 700;
  line-height: 18px;
  color: #000;
}

.model-head {
  display: flex;
  align-items: center;
  justify-content: space-between;
  height: 49px;
  padding: 0 10px 0 11px;
  background-color: #ababab;
}

.model-name {
  display: flex;
  align-items: center;
  gap: 5px;
  color: #fff;
  font-weight: 700;
}

.help svg {
  width: 28px;
  height: 30px;
}

.help-q {
  font-size: 19px;
  font-weight: 700;
  fill: #1a1a8c;
}

.model-tools {
  display: flex;
  align-items: center;
  height: 37px;
  padding: 0 5px 4px;
}

.model-tools button {
  height: 24px;
  padding-right: 9px;
  display: flex;
  align-items: center;
}

.model-tools button + button {
  padding-left: 12px;
  border-left: 1px solid #aaa;
}

.model-tools svg {
  width: 20px;
  height: 18px;
}

.model-tree {
  flex: 1;
  min-height: 0;
  background-color: #fff;
  border: 1px solid #777;
  border-bottom: 0;
  padding-left: 6px;
  font-size: 20px;
  color: #222;
}

.row {
  display: flex;
  align-items: center;
  white-space: nowrap;
}

.model-tree .row {
  height: 32px;
}

.row svg {
  width: 22px;
  height: 22px;
  margin-right: 3px;
}

.model-tree li {
  position: relative;
}

.model-tree li ul {
  margin-left: 26px;
}

/* connector lines */
.model-tree li::before {
  content: "";
  position: absolute;
  left: 5px;
  top: 0;
  bottom: 0;
  border-left: 1px solid #888;
}

.model-tree li:last-child::before {
  bottom: auto;
  height: 16px;
}

.model-tree li .row::before {
  content: "";
  position: absolute;
  left: 6px;
  width: 14px;
  border-top: 1px solid #888;
}

.leaf {
  padding-left: 26px;
}

.exp {
  position: relative;
  width: 12px;
  height: 12px;
  margin-right: 14px;
  border: 1px solid #777;
  background: linear-gradient(#222, #222) center / 6px 2px no-repeat #fff;
}

.exp.plus {
  background: linear-gradient(#222, #222) center / 6px 2px no-repeat, linear-gradient(#222, #222) center / 2px 6px no-repeat #fff;
}

/* 3D view */
.view {
  flex: 1;
  position: relative;
  min-width: 0;
  background-color: #fff;
  overflow: hidden;
}

.pyramid {
  position: absolute;
  left: 45px;
  top: 290px;
  width: 484px;
  height: 424px;
}

.cone {
  position: absolute;
  left: 622px;
  top: 554px;
  width: 348px;
  height: 382px;
}

.cone svg {
  position: absolute;
  inset: 0;
}

.cone-face {
  height: 100%;
  background: conic-gradient(at 200px 0, #939391 0deg, #939391 165deg, #979795 172deg, #9c9b99 180deg, #a4a3a0 190deg, #acaba7 200deg, #b4b3af 212deg, #b8b9b4 221deg);
  clip-path: path("M200 0L23 207C7 220 1 240 1 260C1 324 85 379 190 379C280 379 346 337 346 284C346 269 343 257 335 243Z");
}

/* Content Center window */
.dialog {
  position: absolute;
  left: 978px;
  right: -110px;
  top: 4px;
  bottom: 0;
  display: flex;
  flex-direction: column;
  background-color: #f0f0f0;
  border-top: 1px solid #f0bd6a;
  border-left: 1px solid #999;
  box-shadow: 0 0 18px rgba(0, 0, 0, 0.4);
  color: #222;
}

.dialog h1 {
  margin: 0;
  padding-left: 15px;
  height: 61px;
  line-height: 60px;
  font-size: 23px;
  font-weight: 400;
  background-color: #fff;
}

.menu {
  display: flex;
  gap: 19px;
  height: 38px;
  padding-left: 10px;
  line-height: 36px;
  background-color: #fff;
  border-bottom: 1px solid #a0a0a0;
}

.toolbar {
  display: flex;
  align-items: center;
  gap: 1px;
  height: 40px;
  padding-left: 7px;
  border-bottom: 1px solid #a0a0a0;
}

.toolbar button {
  display: flex;
  align-items: center;
  justify-content: center;
  width: 30px;
  height: 30px;
  border: 1px solid transparent;
}

.toolbar .narrow {
  width: 20px;
  margin-right: 5px;
}

.toolbar .on {
  background-color: #c0dcf3;
  border-color: #90c8f6;
}

.toolbar svg {
  width: 22px;
  height: 22px;
}

.sep {
  width: 1px;
  height: 26px;
  margin: 0 3px;
  background-color: #888;
}

.panes {
  flex: 1;
  min-height: 0;
  display: flex;
  gap: 4px;
  padding-top: 1px;
}

.pane {
  border: 1px solid #888;
}

.category {
  width: 267px;
  flex: none;
  background-color: #fff;
  border-bottom: 0;
  overflow: hidden;
}

.pane-head {
  display: flex;
  align-items: center;
  justify-content: space-between;
  height: 46px;
  padding: 0 12px 0 3px;
  background: linear-gradient(90deg, #737373, #9c9c9c 270px);
  color: #1c1c1c;
}

.category .pane-head {
  font-size: 23px;
}

.pane-head button {
  display: flex;
  align-items: center;
  justify-content: center;
  width: 22px;
  height: 22px;
  border: 2px solid #eee;
  border-radius: 3px;
  background-color: #b4b4b4;
}

.pane-head svg {
  width: 14px;
  height: 14px;
}

.cat-tree {
  padding-left: 7px;
  font-size: 20px;
}

.cat-tree ul {
  margin-left: 25px;
}

.cat-tree li {
  position: relative;
}

.cat-tree .row {
  height: 29px;
}

/* keeps the long list on the scaled row pitch */
.cat-tree > li > ul > li:first-child .row,
.shapes li:nth-child(3n) .row {
  height: 30px;
}

.cat-tree li::before {
  content: "";
  position: absolute;
  left: 8px;
  top: 0;
  bottom: 0;
  border-left: 1px dotted #888;
}

.cat-tree ul > li:last-child::before {
  bottom: auto;
  height: 15px;
}

.cat-tree > li:first-child::before {
  top: 15px;
}

.cat-tree .row::before {
  content: "";
  position: absolute;
  left: 9px;
  width: 13px;
  border-top: 1px dotted #888;
}

.cat-tree > li:last-child > .row::before {
  display: none;
}

.cat-tree .row svg {
  margin-right: 2px;
}

.cat-tree .leaf {
  padding-left: 23px;
}

.cat-tree .row span {
  padding: 0 3px;
}

.current {
  background-color: #f0f0f0;
}

.box {
  position: relative;
  flex: none;
  width: 17px;
  height: 17px;
  margin-right: 6px;
  border: 1px solid #999;
  border-radius: 2px;
  background: linear-gradient(#3c5aa8, #3c5aa8) center / 11px 1px no-repeat #eee;
}

.box.plus {
  background: linear-gradient(#3c5aa8, #3c5aa8) center / 11px 1px no-repeat, linear-gradient(#3c5aa8, #3c5aa8) center / 1px 11px no-repeat #eee;
}

.t,
.l,
.r {
  stroke: #222;
  stroke-width: 1.3px;
  stroke-linejoin: round;
}

.t {
  fill: #ffff78;
}

.l {
  fill: #ffdc00;
}

.r {
  fill: #f0aa00;
}

.right {
  flex: 1;
  min-width: 0;
  display: flex;
  flex-direction: column;
  gap: 4px;
}

.search {
  display: flex;
  align-items: flex-start;
  height: 75px;
  padding: 15px 0 0 19px;
  font-size: 20px;
}

.search label {
  width: 121px;
  line-height: 34px;
}

.search-box {
  position: relative;
  width: 399px;
}

.search-box input {
  display: block;
  width: 100%;
  height: 36px;
  padding: 0 40px 0 4px;
  border: 1px solid #777;
  outline: 0;
  font: inherit;
  color: #222;
  background-color: #fff;
}

.search-box input::selection {
  background-color: #3399ff;
  color: #fff;
}

.search-box svg {
  position: absolute;
  right: 10px;
  top: 14px;
  width: 16px;
  height: 10px;
}

.search button {
  width: 156px;
  height: 46px;
  margin: 1px 0 0 41px;
  border: 2px solid #0f78d4;
  background-color: #e1e1e1;
}

.results {
  flex: 1;
  background-color: #fff;
  border-bottom: 0;
}

.items {
  display: flex;
  padding-top: 2px;
  font-size: 20px;
}

.item {
  width: 166px;
  display: flex;
  flex-direction: column;
  align-items: center;
}

.item svg {
  width: 80px;
  height: 60px;
  margin-bottom: 4px;
}

.item span {
  padding: 0 3px;
  line-height: 28px;
}

.selected svg {
  background-color: #95c5f8;
}

.selected span {
  background-color: #3399ff;
  color: #fff;
}
```
